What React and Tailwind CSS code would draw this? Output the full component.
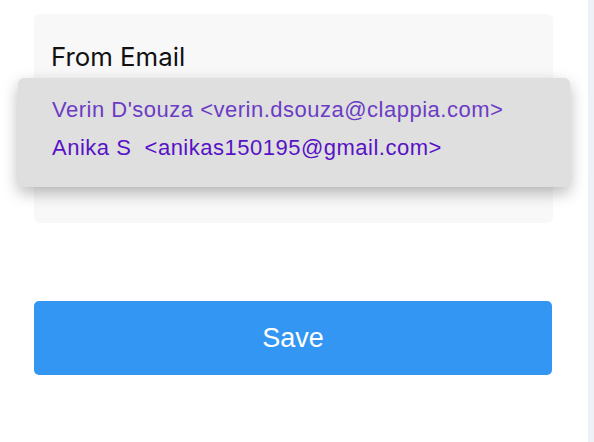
export default function App() {
  return (
    <div className="h-[442px] w-[594px] flex bg-white overflow-hidden">
      <div className="flex-1 relative">
        <div className="mt-[14px] ml-[34px] w-[519px] h-[209px] bg-[#f8f8f8] rounded-md pt-[27px] pl-[17px]">
          <div className="font-['Inter',sans-serif] text-[25.8px] leading-[32px] text-[#111]">
            From Email
          </div>
        </div>

        {/* dropdown menu */}
        <div className="absolute left-[18px] top-[78px] w-[552px] h-[109px] bg-[#dfdfdf] rounded-md shadow-[0_6px_16px_rgba(0,0,0,0.28)] pl-[34px] pt-[19px] font-['Liberation_Sans',Arial,sans-serif] text-[22px] tracking-[0.5px]">
          <div className="text-[#6b3cc4] leading-[26px]">
            Verin D'souza &lt;verin.dsouza@clappia.com&gt;
          </div>
          <div className="text-[#5712c6] leading-[26px] mt-[12px] whitespace-pre">
            {"Anika S  <anikas150195@gmail.com>"}
          </div>
        </div>

        <button className="mt-[78px] ml-[34px] w-[518px] h-[74px] bg-[#3396f2] rounded-[5px] text-white text-[27px] font-['Liberation_Sans',Arial,sans-serif] flex items-center justify-center">
          Save
        </button>
      </div>
      <div className="w-[6px] bg-[#eef2f7]" />
    </div>
  );
}
